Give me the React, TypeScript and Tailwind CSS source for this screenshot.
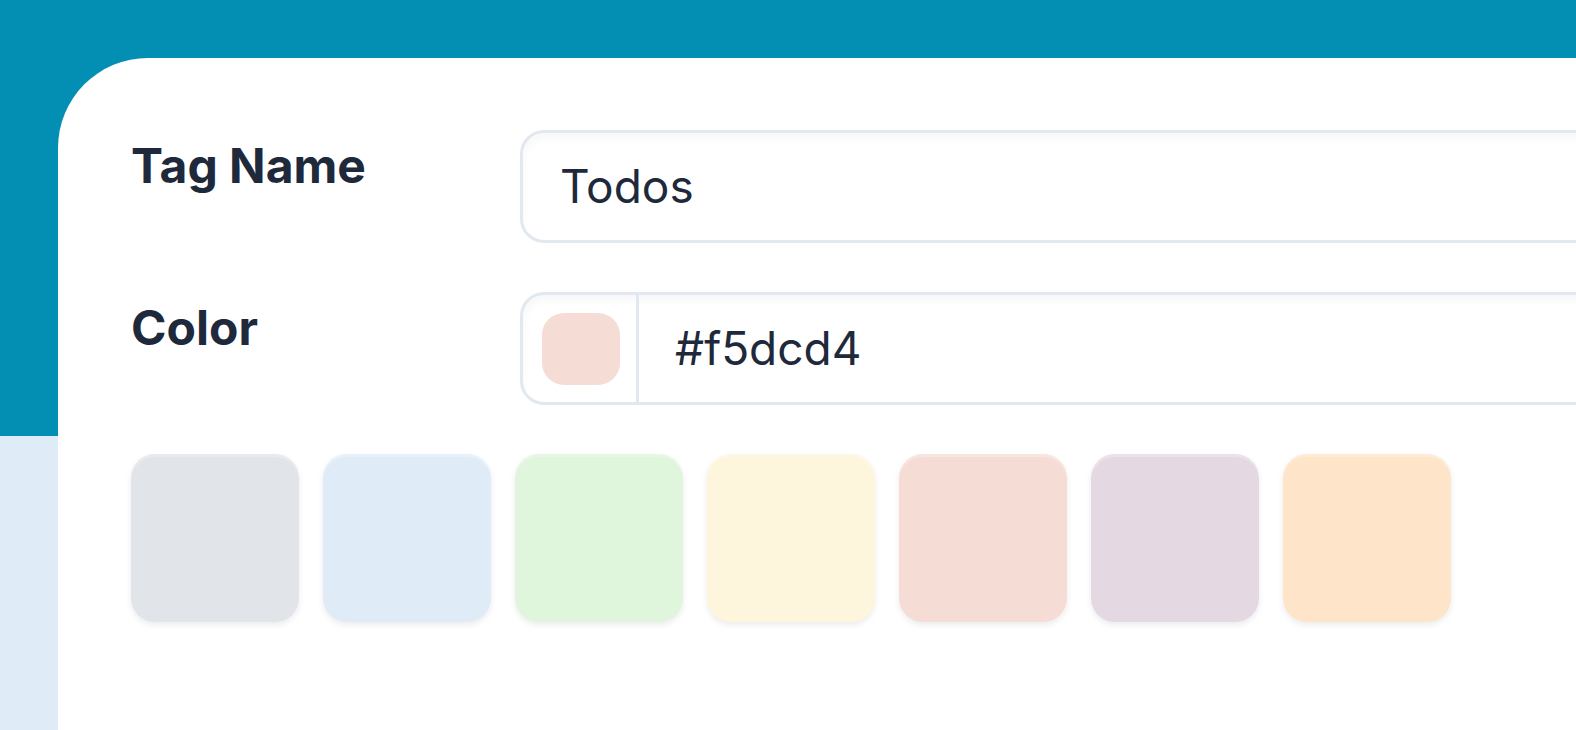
import { useState } from 'react'

const swatches = ['#e1e5e9', '#dfecf7', '#dff5dc', '#fdf5dc', '#f5dcd4', '#e4d8e2', '#fee4c8']

export default function App() {
  const [name, setName] = useState('Todos')
  const [color, setColor] = useState('#f5dcd4')

  return (
    <div className="h-[730px] w-[1576px] overflow-hidden bg-[#dfecf7] font-['Inter',sans-serif] text-[#1e293b]">
      {/* header band */}
      <div className="h-[436px] w-full bg-[#038fb3]" />

      {/* card */}
      <div className="-mt-[378px] ml-[58px] h-[800px] w-[1700px] rounded-tl-[90px] bg-white px-[73px] pt-[72px]">
        <div className="grid grid-cols-[389px_1fr] gap-y-[49px]">
          <label className="text-[48px] leading-[72px] font-bold">Tag Name</label>
          <div className="flex h-[113px] items-center rounded-[24px] border-[3px] border-[#e2e8f0] px-[37px] shadow-[inset_0_6px_8px_rgba(15,23,42,0.03)]">
            <input
              value={name}
              onChange={(e) => setName(e.target.value)}
              className="w-full bg-transparent text-[46px] outline-none"
            />
          </div>

          <label className="text-[48px] leading-[72px] font-bold">Color</label>
          <div className="flex h-[113px] items-stretch rounded-[24px] border-[3px] border-[#e2e8f0] shadow-[inset_0_6px_8px_rgba(15,23,42,0.03)]">
            <div className="flex w-[116px] items-center border-r-[3px] border-[#e2e8f0] pl-[19px]">
              <div className="h-[72px] w-[78px] rounded-[22px]" style={{ backgroundColor: color }} />
            </div>
            <div className="flex flex-1 items-center pl-[36px]">
              <input
                value={color}
                onChange={(e) => setColor(e.target.value)}
                className="w-full bg-transparent text-[46px] outline-none"
              />
            </div>
          </div>
        </div>

        {/* palette */}
        <div className="mt-[49px] flex gap-[24px]">
          {swatches.map((c) => (
            <button
              key={c}
              onClick={() => setColor(c)}
              className="h-[168px] w-[168px] rounded-[24px] shadow-[inset_0_3px_0_rgba(255,255,255,0.25),0_3px_6px_rgba(0,0,0,0.08)]"
              style={{ backgroundColor: c }}
            />
          ))}
        </div>
      </div>
    </div>
  )
}
